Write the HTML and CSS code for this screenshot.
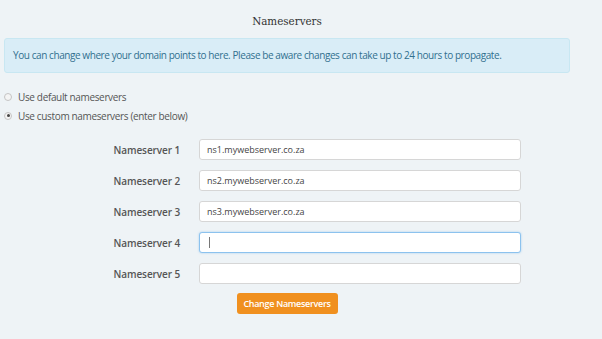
FILE: index.html
```html
<!DOCTYPE html>
<html lang="en">
<head>
    <meta charset="UTF-8">
    <meta name="viewport" content="width=device-width, initial-scale=1.0">
    <title>Nameservers</title>
    <link rel="stylesheet" href="styles.css">
</head>
<body>
    <div class="ns-container">
        <h2>Nameservers</h2>
        <div class="alert-info">You can change where your domain points to here. Please be aware changes can take up to 24 hours to propagate.</div>

        <div class="radio-list">
            <label class="radio-row"><span class="radio"></span>Use default nameservers</label>
            <label class="radio-row"><span class="radio checked"></span>Use custom nameservers (enter below)</label>
        </div>

        <form class="ns-form">
            <div class="form-row">
                <label for="ns1">Nameserver 1</label>
                <input type="text" id="ns1" value="ns1.mywebserver.co.za">
            </div>
            <div class="form-row">
                <label for="ns2">Nameserver 2</label>
                <input type="text" id="ns2" value="ns2.mywebserver.co.za">
            </div>
            <div class="form-row">
                <label for="ns3">Nameserver 3</label>
                <input type="text" id="ns3" value="ns3.mywebserver.co.za">
            </div>
            <div class="form-row">
                <label for="ns4">Nameserver 4</label>
                <div class="input focused"><span class="caret"></span></div>
            </div>
            <div class="form-row">
                <label for="ns5">Nameserver 5</label>
                <input type="text" id="ns5" value="">
            </div>
            <div class="actions">
                <button type="button">Change Nameservers</button>
            </div>
        </form>
    </div>
</body>
</html>
```

FILE: styles.css
```css
body {
    margin: 0;
    background-color: #eef3f6;
    font-family: "Open Sans", "Noto Sans", sans-serif;
    color: #555;
}

.ns-container {
    width: 566px;
    margin-left: 4px;
    padding-top: 14px;
}

h2 {
    margin: 0 0 9px;
    text-align: center;
    font-family: "DejaVu Serif", serif;
    font-stretch: condensed;
    font-size: 11.5px;
    font-weight: normal;
    color: #333;
    line-height: 15px;
}

.alert-info {
    height: 33px;
    line-height: 33px;
    padding: 0 8px;
    background-color: #d9edf7;
    border: 1px solid #c8e7f2;
    border-radius: 3px;
    color: #31708f;
    font-size: 10px;
    letter-spacing: -0.42px;
}

.radio-list {
    margin-top: 16px;
    display: flex;
    flex-direction: column;
    gap: 4px;
}

.radio-row {
    display: flex;
    align-items: center;
    height: 15px;
    font-size: 10px;
    letter-spacing: -0.35px;
    color: #555;
}

.radio {
    width: 6px;
    height: 6px;
    border: 1px solid #c4c4c4;
    border-radius: 50%;
    background-color: #f4f4f4;
    margin-right: 6px;
    position: relative;
}

.radio.checked::after {
    content: "";
    position: absolute;
    left: 1.5px;
    top: 1.5px;
    width: 3px;
    height: 3px;
    border-radius: 50%;
    background-color: #444;
}

.ns-form {
    margin-top: 16px;
    display: flex;
    flex-direction: column;
    gap: 10px;
}

.form-row {
    display: grid;
    grid-template-columns: 176px 322px;
    column-gap: 19px;
    align-items: center;
}

.form-row label {
    text-align: right;
    font-size: 10px;
    font-weight: 600;
    letter-spacing: -0.1px;
    color: #555;
}

.form-row input,
.form-row .input {
    box-sizing: border-box;
    height: 21px;
    padding: 0 7px;
    border: 1px solid #d6d6d6;
    border-radius: 3px;
    background-color: #fff;
    font-family: "Open Sans", "Noto Sans", sans-serif;
    font-size: 9px;
    color: #444;
    outline: none;
}

.form-row .input {
    display: flex;
    align-items: center;
}

.form-row .focused {
    border-color: #8cc2ee;
    box-shadow: 0 0 2px rgba(102, 175, 233, 0.6);
}

.caret {
    width: 1px;
    height: 11px;
    margin-left: 2px;
    background-color: #777;
}

.actions {
    display: flex;
    justify-content: center;
    margin-top: -1px;
}

button {
    width: 101px;
    height: 21px;
    padding: 0;
    background-color: #f0901f;
    color: #fff;
    border: none;
    border-radius: 3px;
    font-family: "Open Sans", "Noto Sans", sans-serif;
    font-size: 9px;
    font-weight: 600;
    letter-spacing: -0.3px;
}
```
